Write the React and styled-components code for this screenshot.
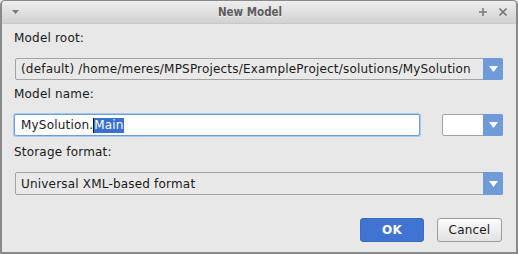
import React from "react";
import styled, { createGlobalStyle } from "styled-components";

const Global = createGlobalStyle`
  html, body { margin: 0; padding: 0; background: #e8e8e8; }
  body { width: 518px; height: 254px; overflow: hidden; font-family: "DejaVu Sans", Verdana, sans-serif; letter-spacing: 0.19px; }
  * { box-sizing: border-box; }
`;

const Window = styled.div`
  width: 518px;
  height: 254px;
  display: flex;
  flex-direction: column;
  background: #e8e8e8;
  border: 1px solid #8a8a8a;
  border-width: 1px 2px 2px 2px;
  border-radius: 5px 5px 0 0;
  overflow: hidden;
`;

const TitleBar = styled.div`
  height: 23px;
  flex: none;
  display: flex;
  align-items: center;
  padding: 0 9px 0 10px;
  background: linear-gradient(#eeeeee, #d2d2d2);
  border-bottom: 1px solid #c8c8c8;
`;

const Title = styled.div`
  flex: 1;
  text-align: center;
  font-family: "DejaVu Sans Condensed", "DejaVu Sans", sans-serif;
  font-weight: bold;
  font-size: 11.5px;
  letter-spacing: 0;
  color: #5c5c5c;
  text-shadow: 0 1px 0 rgba(255,255,255,0.6);
  padding-left: 2px;
`;

const TitleIcon = styled.svg`
  flex: none;
  display: block;
`;

const TitleButtons = styled.div`
  display: flex;
  gap: 12px;
  align-items: center;
`;

const Content = styled.div`
  flex: 1;
  display: flex;
  flex-direction: column;
  padding: 7px 13px 0 12px;
`;

const Label = styled.div`
  font-size: 12px;
  line-height: 15px;
  color: #1a1a1a;
  margin-top: ${p => p.$mt}px;
`;

const Row = styled.div`
  display: flex;
  gap: 22px;
  margin-top: 12px;
`;

const Combo = styled.div`
  flex: ${p => (p.$small ? "none" : "1")};
  width: ${p => (p.$small ? "61px" : "auto")};
  height: ${p => p.$h || 22}px;
  display: flex;
  align-items: stretch;
  border: 1px solid #a3a3a3;
  border-radius: 2px;
  background: ${p => (p.$white ? "#ffffff" : "#e9e9e9")};
  margin-left: ${p => (p.$small ? "0" : "1px")};
`;

const ComboText = styled.div`
  flex: 1;
  display: flex;
  align-items: center;
  padding-left: 5px;
  font-size: 12px;
  color: #1a1a1a;
  white-space: nowrap;
  overflow: hidden;
`;

const ArrowButton = styled.div`
  width: 20px;
  flex: none;
  display: flex;
  align-items: center;
  justify-content: center;
  background: #6f9cd9;
  margin: -1px -1px -1px 0;
  border-radius: 0 2px 2px 0;
`;

const TextField = styled.div`
  flex: 1;
  height: 22px;
  display: flex;
  align-items: center;
  padding-left: 6px;
  background: #ffffff;
  border: 1px solid #6e9fdc;
  box-shadow: 0 0 0 1px #a9c8ef;
  border-radius: 2px;
  font-size: 12px;
  color: #1a1a1a;
  white-space: nowrap;
`;

const Selected = styled.span`
  background: #3a70d0;
  color: #ffffff;
  border-left: 1px solid #111;
  line-height: 15px;
`;

const Buttons = styled.div`
  display: flex;
  justify-content: flex-end;
  gap: 13px;
  margin-top: 23px;
  margin-right: 1px;
`;

const Button = styled.div`
  width: ${p => p.$w}px;
  height: 24px;
  display: flex;
  align-items: center;
  justify-content: center;
  font-size: 12px;
  border-radius: 3px;
  ${p =>
    p.$primary
      ? `background: #3f74d2; border: 1px solid #3a6bc2; color: #fff; font-weight: bold;`
      : `background: linear-gradient(#fbfbfb, #e2e2e2); border: 1px solid #9c9c9c; color: #1a1a1a;`}
`;

const Arrow = () => (
  <svg width="9" height="6" viewBox="0 0 9 6">
    <path d="M0 0 H9 L4.5 6 Z" fill="#ffffff" />
  </svg>
);

export default function App() {
  return (
    <>
      <Global />
      <Window>
        <TitleBar>
          <TitleIcon width="7" height="4" viewBox="0 0 7 4">
            <path d="M0 0 H7 L3.5 4 Z" fill="#7a7a7a" />
          </TitleIcon>
          <Title>New Model</Title>
          <TitleButtons>
            <TitleIcon width="8" height="8" viewBox="0 0 8 8">
              <path d="M4 0 V8 M0 4 H8" stroke="#7a7a7a" strokeWidth="1.6" />
            </TitleIcon>
            <TitleIcon width="8" height="8" viewBox="0 0 8 8">
              <path d="M0.5 0.5 L7.5 7.5 M7.5 0.5 L0.5 7.5" stroke="#7a7a7a" strokeWidth="1.6" />
            </TitleIcon>
          </TitleButtons>
        </TitleBar>
        <Content>
          <Label $mt={0}>Model root:</Label>
          <Row>
            <Combo>
              <ComboText>(default) /home/meres/MPSProjects/ExampleProject/solutions/MySolution</ComboText>
              <ArrowButton><Arrow /></ArrowButton>
            </Combo>
          </Row>
          <Label $mt={7}>Model name:</Label>
          <Row>
            <TextField>
              MySolution.<Selected>Main</Selected>
            </TextField>
            <Combo $small $white>
              <ComboText />
              <ArrowButton><Arrow /></ArrowButton>
            </Combo>
          </Row>
          <Label $mt={9}>Storage format:</Label>
          <Row>
            <Combo $h={23}>
              <ComboText>Universal XML-based format</ComboText>
              <ArrowButton><Arrow /></ArrowButton>
            </Combo>
          </Row>
          <Buttons>
            <Button $primary $w={64}>OK</Button>
            <Button $w={65}>Cancel</Button>
          </Buttons>
        </Content>
      </Window>
    </>
  );
}
